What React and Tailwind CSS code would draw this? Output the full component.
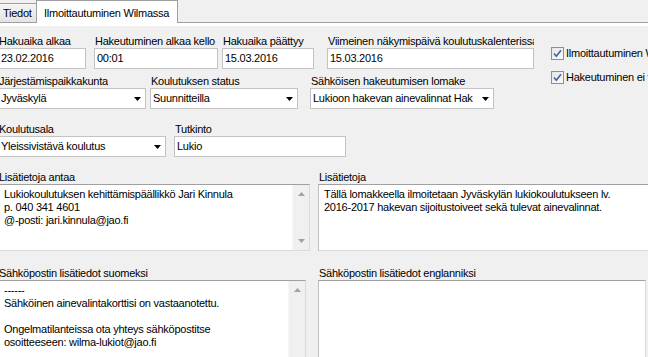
import React from 'react'

function Label({ children }) {
  return (
    <div className="h-[13px] leading-[13px] pl-[1px] whitespace-nowrap overflow-hidden">
      {children}
    </div>
  )
}

function TextInput({ value }) {
  return (
    <div className="h-[21px] border border-[#c3c3c3] bg-white pl-[2px] flex items-center whitespace-nowrap overflow-hidden">
      {value}
    </div>
  )
}

function Arrow() {
  return (
    <svg width="7" height="4" viewBox="0 0 7 4" className="shrink-0 ml-[6px] mr-[4px]">
      <polygon points="0,0 7,0 3.5,4" fill="#000" />
    </svg>
  )
}

function Select({ value }) {
  return (
    <div className="h-[21px] border border-[#c3c3c3] bg-white pl-[2px] flex items-center">
      <div className="flex-1 whitespace-nowrap overflow-hidden">{value}</div>
      <Arrow />
    </div>
  )
}

function ScrollBar() {
  return (
    <div className="w-[17px] shrink-0 bg-[#f0f0f0] border-l border-[#f7f7f7] flex flex-col justify-between items-center py-[7px]">
      <svg width="7" height="4" viewBox="0 0 7 4">
        <polygon points="0,4 7,4 3.5,0" fill="#a3a3a3" />
      </svg>
      <svg width="7" height="4" viewBox="0 0 7 4">
        <polygon points="0,0 7,0 3.5,4" fill="#a3a3a3" />
      </svg>
    </div>
  )
}

function TextArea({ lines, scroll, className }) {
  return (
    <div className={`flex bg-white border border-[#dadada] border-t-[#a0a0a0] border-l-[#c0c0c0] ${className}`}>
      <div className="flex-1 pl-[5px] pt-[3px] leading-[13px] whitespace-pre overflow-hidden">
        {lines.join('\n')}
      </div>
      {scroll && <ScrollBar />}
    </div>
  )
}

function Field({ label, className, children }) {
  return (
    <div className={`flex flex-col shrink-0 ${className}`}>
      <Label>{label}</Label>
      {children}
    </div>
  )
}

function Check({ label }) {
  return (
    <div className="flex items-center h-[13px] whitespace-nowrap">
      <div className="w-[13px] h-[13px] shrink-0 border border-[#8f8f8f] bg-gradient-to-br from-[#e6e6e6] to-[#fbfbfb] flex items-center justify-center">
        <svg width="11" height="11" viewBox="0 0 11 11">
          <path d="M2 5.5 L4.3 8.2 L9 2.2" fill="none" stroke="#4a64a0" strokeWidth="1.7" />
        </svg>
      </div>
      <span className="ml-[2px] leading-[13px]">{label}</span>
    </div>
  )
}

export default function App() {
  return (
    <div className="w-[648px] h-[357px] overflow-hidden bg-[#f0f0f0] text-black text-[11px] tracking-[-0.25px] font-['Liberation_Sans',Arial,sans-serif]">
      {/* tabs */}
      <div className="flex items-end h-[23px]">
        <div className="-ml-[2px] w-[39px] h-[20px] shrink-0 border border-[#a0a0a0] bg-gradient-to-b from-[#f4f4f4] to-[#e4e4e4] pl-[4px] pt-[3px] leading-[13px]">
          Tiedot
        </div>
        <div className="-ml-[1px] w-[142px] h-[23px] shrink-0 border border-b-0 border-[#a0a0a0] bg-white pl-[7px] pt-[6px] leading-[13px] whitespace-nowrap">
          Ilmoittautuminen Wilmassa
        </div>
        <div className="flex-1 h-[23px] border-b border-[#a0a0a0]" />
      </div>
      <div className="h-[3px] bg-white" />

      <div className="-ml-[2px] pt-[9px]">
        {/* rows 1 and 2 with checkboxes */}
        <div className="flex">
          <div className="flex flex-col w-[536px] shrink-0">
            <div className="flex">
              <Field label="Hakuaika alkaa" className="w-[88px]">
                <TextInput value="23.02.2016" />
              </Field>
              <Field label="Hakeutuminen alkaa kello" className="ml-[8px] w-[124px]">
                <TextInput value="00:01" />
              </Field>
              <Field label="Hakuaika päättyy" className="ml-[4px] w-[92px]">
                <TextInput value="15.03.2016" />
              </Field>
              <Field label="Viimeinen näkymispäivä koulutuskalenterissa" className="ml-[13px] w-[207px]">
                <TextInput value="15.03.2016" />
              </Field>
            </div>
            <div className="flex mt-[6px]">
              <Field label="Järjestämispaikkakunta" className="w-[148px]">
                <Select value="Jyväskylä" />
              </Field>
              <Field label="Koulutuksen status" className="ml-[4px] w-[148px]">
                <Select value="Suunnitteilla" />
              </Field>
              <Field label="Sähköisen hakeutumisen lomake" className="ml-[12px] w-[184px]">
                <Select value="Lukioon hakevan ainevalinnat Hak" />
              </Field>
            </div>
          </div>
          <div className="flex flex-col gap-[11px] ml-[17px] pt-[12px]">
            <Check label="Ilmoittautuminen Wilmassa käytössä" />
            <Check label="Hakeutuminen ei vaadi kirjautumista" />
          </div>
        </div>

        {/* row 3 */}
        <div className="flex mt-[14px]">
          <Field label="Koulutusala" className="w-[168px]">
            <Select value="Yleissivistävä koulutus" />
          </Field>
          <Field label="Tutkinto" className="ml-[8px] w-[172px]">
            <TextInput value="Lukio" />
          </Field>
        </div>

        {/* row 4 */}
        <div className="flex mt-[14px]">
          <Field label="Lisätietoja antaa" className="w-[312px]">
            <TextArea
              className="h-[67px]"
              scroll
              lines={[
                'Lukiokoulutuksen kehittämispäällikkö Jari Kinnula',
                'p. 040 341 4601',
                '@-posti: jari.kinnula@jao.fi',
              ]}
            />
          </Field>
          <Field label="Lisätietoja" className="ml-[8px] w-[340px]">
            <TextArea
              className="h-[67px]"
              lines={[
                'Tällä lomakkeella ilmoitetaan Jyväskylän lukiokoulutukseen lv.',
                '2016-2017 hakevan sijoitustoiveet sekä tulevat ainevalinnat.',
              ]}
            />
          </Field>
        </div>

        {/* row 5 */}
        <div className="flex mt-[16px]">
          <Field label="Sähköpostin lisätiedot suomeksi" className="w-[308px]">
            <TextArea
              className="h-[90px]"
              scroll
              lines={[
                '------',
                'Sähköinen ainevalintakorttisi on vastaanotettu.',
                '',
                'Ongelmatilanteissa ota yhteys sähköpostitse',
                'osoitteeseen: wilma-lukiot@jao.fi',
              ]}
            />
          </Field>
          <Field label="Sähköpostin lisätiedot englanniksi" className="ml-[12px] w-[328px]">
            <TextArea className="h-[90px]" lines={['']} />
          </Field>
        </div>
      </div>
    </div>
  )
}
